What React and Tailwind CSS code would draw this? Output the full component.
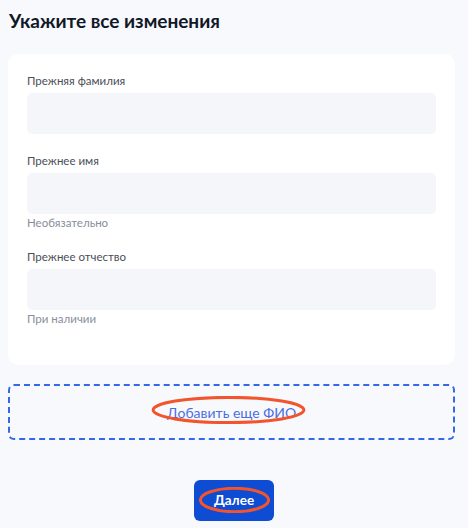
import React from 'react';

const Field = ({ label, hint }) => (
  <div className="flex flex-col">
    <label className="text-[11.5px] leading-[16px] text-[#4a4f57] mb-[4px]">{label}</label>
    <div className="h-[41px] rounded-[5px] bg-[#f5f6fa]" />
    {hint && <div className="text-[11.5px] leading-[14px] mt-[2px] text-[#878f9a]">{hint}</div>}
  </div>
);

// red hand-drawn ellipse used as an annotation over text
const Mark = ({ className }) => (
  <svg className={`absolute pointer-events-none ${className}`} viewBox="0 0 100 40" preserveAspectRatio="none">
    <ellipse cx="50" cy="20" rx="48" ry="18" fill="none" stroke="#f2542d" strokeWidth="3" vectorEffect="non-scaling-stroke" />
  </svg>
);

export default function App() {
  return (
    <div className="w-[468px] h-[528px] bg-[#f8f9fd] font-['Lato','Noto_Sans',sans-serif] overflow-hidden">
      <h1 className="px-[9px] pt-[8px] text-[19px] leading-[26px] font-bold text-[#111827]">Укажите все изменения</h1>

      <div className="ml-[8px] mt-[20px] w-[447px] h-[311px] bg-white rounded-[10px] px-[19px] pt-[19px] flex flex-col gap-[19px]">
        <Field label="Прежняя фамилия" />
        <Field label="Прежнее имя" hint="Необязательно" />
        <Field label="Прежнее отчество" hint="При наличии" />
      </div>

      <div className="relative ml-[8px] mt-[19px] w-[447px] h-[56px] rounded-[6px] border-2 border-dashed border-[#3568e8] flex items-center justify-center">
        <span className="text-[14px] leading-[20px] pt-[2px] text-[#4a6ee0]">Добавить еще ФИО</span>
        <Mark className="w-[157px] h-[28px] left-[140px] top-[10px]" />
      </div>

      <div className="flex justify-center mt-[40px]">
        <button className="relative w-[80px] h-[41px] rounded-[6px] bg-[#0d4cd3] text-white text-[13.5px] font-bold">
          Далее
          <Mark className="w-[71px] h-[26px] left-[5px] top-[7px]" />
        </button>
      </div>
    </div>
  );
}
